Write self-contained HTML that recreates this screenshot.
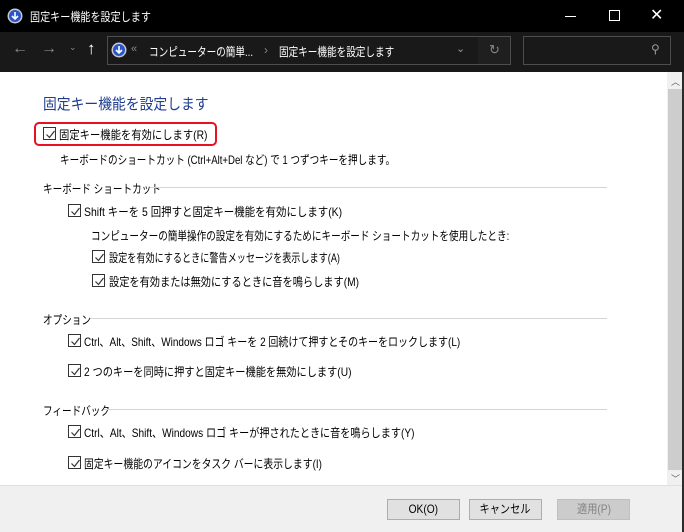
<!DOCTYPE html>
<html><head><meta charset="utf-8"><style>
*{margin:0;padding:0;box-sizing:border-box}
body{width:684px;height:532px;overflow:hidden;background:#fff;font-family:"Liberation Sans","Noto Sans CJK JP",sans-serif;font-size:12px;color:#000;position:relative}
.a{position:absolute;white-space:nowrap}
.s{transform:scaleX(0.8);transform-origin:0 0}
.cb{position:absolute;width:13px;height:13px;border:1px solid #333;background:#fff}
.cb svg{position:absolute;left:1px;top:1px}
.sec{position:absolute;height:1px;background:#d5d5d5}
.btn{position:absolute;height:21px;border:1px solid #adadad;background:#e1e1e1;text-align:center;line-height:19px;font-size:12px}
.btn span{display:inline-block;transform:scaleX(0.85)}
</style></head><body>
<div class="a" style="left:0;top:0;width:684px;height:32px;background:#000"></div>
<svg class="a" style="left:7px;top:8px" width="16" height="16"><circle cx="8" cy="8" r="7.5" fill="#c8c8d0"/><circle cx="8" cy="8" r="6" fill="#2a55c8"/><path d="M5 8 L8 11 L11 8 M8 4 V11" stroke="#fff" stroke-width="1.6" fill="none"/></svg>
<div class="a s" style="left:30px;top:8px;color:#fff;font-size:12px;transform:scaleX(0.84)">固定キー機能を設定します</div>
<div class="a" style="left:565px;top:16px;width:11px;height:1px;background:#fff"></div>
<div class="a" style="left:609px;top:10px;width:11px;height:11px;border:1px solid #fff"></div>
<div class="a" style="left:650px;top:5px;color:#fff;font-size:16px">✕</div>
<div class="a" style="left:0;top:32px;width:684px;height:40px;background:#191919"></div>
<div class="a" style="left:12px;top:40px;color:#888;font-size:16px">←</div>
<div class="a" style="left:41px;top:40px;color:#888;font-size:16px">→</div>
<div class="a" style="left:69px;top:42px;color:#888;font-size:9px">⌄</div>
<div class="a" style="left:87px;top:39px;color:#fff;font-size:17px;font-weight:bold">↑</div>
<div class="a" style="left:107px;top:36px;width:404px;height:29px;border:1px solid #4d4d4d;background:#191919"></div>
<div class="a" style="left:478px;top:37px;width:32px;height:27px;background:#1f1f1f"></div>
<svg class="a" style="left:111px;top:42px" width="16" height="16"><circle cx="8" cy="8" r="7.5" fill="#c8c8d0"/><circle cx="8" cy="8" r="6" fill="#2a55c8"/><path d="M5 8 L8 11 L11 8 M8 4 V11" stroke="#fff" stroke-width="1.6" fill="none"/></svg>
<div class="a" style="left:131px;top:43px;color:#888;font-size:11px">«</div>
<div class="a s" style="left:149px;top:43px;color:#fff">コンピューターの簡単...</div>
<div class="a" style="left:264px;top:43px;color:#888">›</div>
<div class="a s" style="left:279px;top:43px;color:#fff">固定キー機能を設定します</div>
<div class="a" style="left:456px;top:42px;color:#999;font-size:11px">⌄</div>
<div class="a" style="left:489px;top:42px;color:#888;font-size:13px">↻</div>
<div class="a" style="left:523px;top:36px;width:148px;height:29px;border:1px solid #4d4d4d"></div>
<div class="a" style="left:651px;top:42px;color:#999;font-size:12px">⚲</div>

<div class="a" style="left:667px;top:72px;width:17px;height:414px;background:#f0f0f0"></div>
<div class="a" style="left:668px;top:89px;width:14px;height:381px;background:#cdcdcd"></div>
<div class="a" style="left:671px;top:75px;color:#606060;font-size:9px">︿</div>
<div class="a" style="left:671px;top:472px;color:#606060;font-size:9px">﹀</div>
<div class="a" style="left:682px;top:72px;width:2px;height:460px;background:#2b2b2b"></div>

<div class="a s" style="left:43px;top:93px;color:#1e3d8f;font-size:15px;transform:scaleX(0.92)">固定キー機能を設定します</div>
<div class="a" style="left:34px;top:122px;width:183px;height:24px;border:2px solid #e81123;border-radius:5px"></div>
<div class="cb" style="left:43px;top:127px"><svg width="11" height="11"><path d="M1.5 5.5 L4.5 8.5 L9.5 2" stroke="#333" stroke-width="1.2" fill="none"/></svg></div>
<div class="a s" style="left:59px;top:126px;transform:scaleX(0.86)">固定キー機能を有効にします(R)</div>
<div class="a s" style="left:60px;top:151px">キーボードのショートカット (Ctrl+Alt+Del など) で 1 つずつキーを押します。</div>

<div class="a s" style="left:43px;top:180px">キーボード ショートカット</div>
<div class="sec" style="left:150px;top:187px;width:457px"></div>
<div class="cb" style="left:68px;top:204px"><svg width="11" height="11"><path d="M1.5 5.5 L4.5 8.5 L9.5 2" stroke="#333" stroke-width="1.2" fill="none"/></svg></div>
<div class="a s" style="left:84px;top:203px;transform:scaleX(0.87)">Shift キーを 5 回押すと固定キー機能を有効にします(K)</div>
<div class="a s" style="left:91px;top:227px">コンピューターの簡単操作の設定を有効にするためにキーボード ショートカットを使用したとき:</div>
<div class="cb" style="left:92px;top:250px"><svg width="11" height="11"><path d="M1.5 5.5 L4.5 8.5 L9.5 2" stroke="#333" stroke-width="1.2" fill="none"/></svg></div>
<div class="a s" style="left:109px;top:249px;transform:scaleX(0.76)">設定を有効にするときに警告メッセージを表示します(A)</div>
<div class="cb" style="left:92px;top:274px"><svg width="11" height="11"><path d="M1.5 5.5 L4.5 8.5 L9.5 2" stroke="#333" stroke-width="1.2" fill="none"/></svg></div>
<div class="a s" style="left:109px;top:273px;transform:scaleX(0.85)">設定を有効または無効にするときに音を鳴らします(M)</div>

<div class="a s" style="left:43px;top:311px">オプション</div>
<div class="sec" style="left:90px;top:318px;width:517px"></div>
<div class="cb" style="left:68px;top:334px"><svg width="11" height="11"><path d="M1.5 5.5 L4.5 8.5 L9.5 2" stroke="#333" stroke-width="1.2" fill="none"/></svg></div>
<div class="a s" style="left:84px;top:333px;transform:scaleX(0.833)">Ctrl、Alt、Shift、Windows ロゴ キーを 2 回続けて押すとそのキーをロックします(L)</div>
<div class="cb" style="left:68px;top:364px"><svg width="11" height="11"><path d="M1.5 5.5 L4.5 8.5 L9.5 2" stroke="#333" stroke-width="1.2" fill="none"/></svg></div>
<div class="a s" style="left:84px;top:363px;transform:scaleX(0.85)">2 つのキーを同時に押すと固定キー機能を無効にします(U)</div>

<div class="a s" style="left:43px;top:402px">フィードバック</div>
<div class="sec" style="left:104px;top:409px;width:503px"></div>
<div class="cb" style="left:68px;top:425px"><svg width="11" height="11"><path d="M1.5 5.5 L4.5 8.5 L9.5 2" stroke="#333" stroke-width="1.2" fill="none"/></svg></div>
<div class="a s" style="left:84px;top:424px;transform:scaleX(0.843)">Ctrl、Alt、Shift、Windows ロゴ キーが押されたときに音を鳴らします(Y)</div>
<div class="cb" style="left:68px;top:456px"><svg width="11" height="11"><path d="M1.5 5.5 L4.5 8.5 L9.5 2" stroke="#333" stroke-width="1.2" fill="none"/></svg></div>
<div class="a s" style="left:84px;top:455px;transform:scaleX(0.82)">固定キー機能のアイコンをタスク バーに表示します(I)</div>

<div class="a" style="left:0;top:485px;width:682px;height:47px;background:#f0f0f0;border-top:1px solid #dfdfdf"></div>
<div class="btn" style="left:387px;top:499px;width:73px"><span>OK(O)</span></div>
<div class="btn" style="left:469px;top:499px;width:73px"><span>キャンセル</span></div>
<div class="btn" style="left:557px;top:499px;width:73px;background:#ccc;border-color:#bfbfbf;color:#838383"><span>適用(P)</span></div>
</body></html>
